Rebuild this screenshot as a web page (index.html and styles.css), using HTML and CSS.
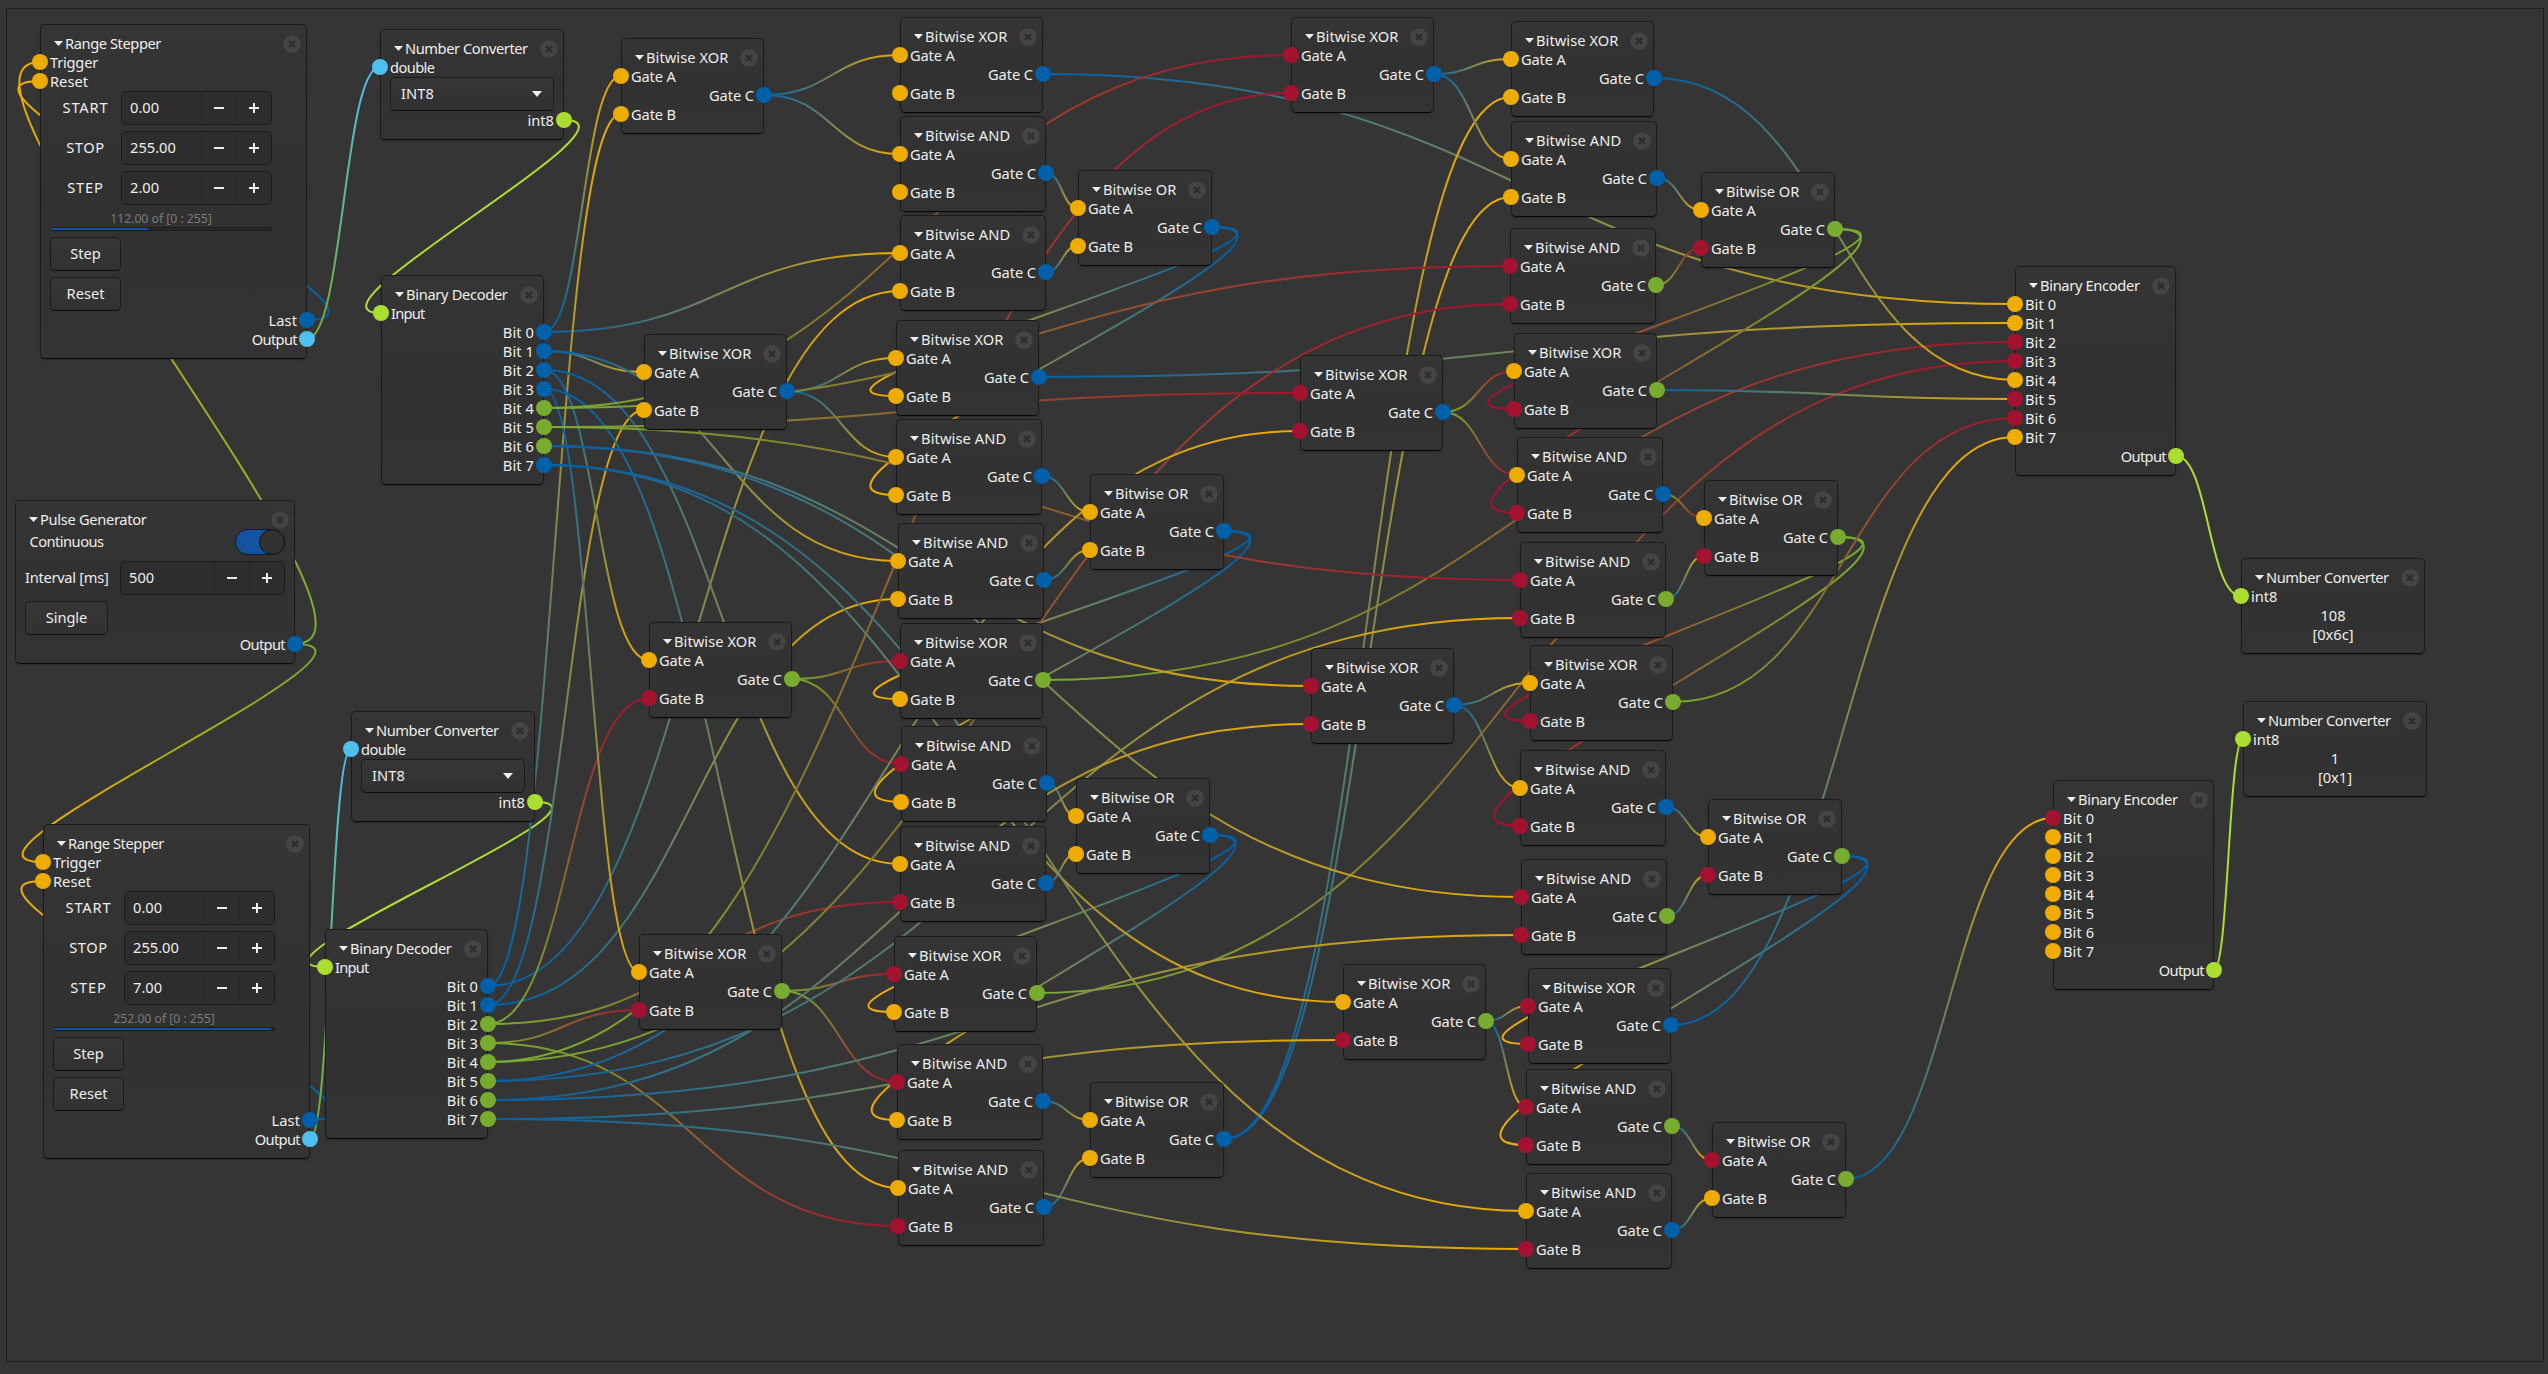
FILE: index.html
```html
<!DOCTYPE html>
<html lang="en">
<head>
<meta charset="utf-8">
<title>Node graph – 8-bit adder</title>
<link rel="stylesheet" href="styles.css">
</head>
<body>
<main class="viewport">
  <svg class="wires" id="wires" width="2548" height="1374" viewBox="0 0 2548 1374"></svg>
  <div class="nodes" id="nodes"></div>
</main>
<script src="graph.js"></script>
</body>
</html>
```
FILE: styles.css
```css
* {
  box-sizing: border-box;
}

body {
  margin: 0;
  width: 2548px;
  height: 1374px;
  overflow: hidden;
  background: #353535;
  color: #eeeeec;
  font: 14.67px/19px "Noto Sans", "Open Sans", sans-serif;
}

.viewport {
  position: relative;
  width: 2548px;
  height: 1374px;
}

.viewport::before {
  content: "";
  position: absolute;
  inset: 8px 4px 12px 6px;
  border: 1px solid #1d1d1d;
}

.wires {
  position: absolute;
  inset: 0;
}

.wire {
  fill: none;
  stroke-width: 2;
}

.node {
  position: absolute;
  display: flex;
  flex-direction: column;
  padding: 9px;
  border: 1px solid #1b1b1b;
  border-bottom-color: #070707;
  border-radius: 5px;
  background: linear-gradient(#353535, #313131 50%, #333333);
  box-shadow: 0 1px 2px rgba(0, 0, 0, 0.25);
  white-space: nowrap;
}

.title {
  display: flex;
  align-items: center;
  height: 19px;
  padding-left: 4px;
}

.caret {
  flex: none;
  width: 9px;
  height: 5px;
  margin-right: 2px;
  background: #eeeeec;
  clip-path: polygon(0 0, 100% 0, 50% 100%);
}

.title .name {
  flex: 1;
}

.close {
  flex: none;
  width: 18px;
  height: 18px;
  margin: 1px -4px 0 0;
}

.port {
  position: relative;
  height: 19px;
}

.port.out {
  text-align: right;
}

.port::before {
  content: "";
  position: absolute;
  top: 1px;
  left: -18px;
  width: 16px;
  height: 16px;
  border-radius: 50%;
  background: var(--port);
}

.port.out::before {
  left: auto;
  right: -18px;
}

.orange { --port: #eeab00; }
.red { --port: #a3132f; }
.blue { --port: #0060a9; }
.green { --port: #78ac2f; }
.sky { --port: #4fbfef; }
.lime { --port: #aade31; }

.form {
  display: grid;
  row-gap: 6px;
  justify-items: stretch;
  align-items: center;
}

.stepper-form {
  grid-template-columns: 71px 151px;
}

.pulse-form {
  grid-template-columns: 83px 165px;
  column-gap: 12px;
}

.label {
  padding-bottom: 2px;
  text-align: center;
}

.spin,
.button,
.combo {
  height: 34px;
  border: 1px solid #1b1b1b;
  border-radius: 5px;
}

.spin {
  display: flex;
  align-items: stretch;
  line-height: 30px;
  background: #2d2d2d;
}

.spin .value {
  flex: 1;
  padding-left: 8px;
}

.spin .sign {
  display: flex;
  align-items: center;
  justify-content: center;
  width: 35px;
  border-left: 1px solid #262626;
}

.button {
  line-height: 31px;
  text-align: center;
  background: linear-gradient(#363636, #323232);
  border-bottom-color: #0c0c0c;
}

.combo {
  display: flex;
  align-items: center;
  justify-content: space-between;
  padding: 0 11px 2px 10px;
  background: linear-gradient(#363636, #313131);
  border-bottom-color: #0c0c0c;
}

.combo .caret {
  width: 10px;
  height: 6px;
  margin: 2px 0 0;
}

.progress {
  width: 222px;
  margin: 6px 0;
}

.progress .text {
  height: 16px;
  font-size: 12.2px;
  line-height: 16px;
  text-align: center;
  color: #7b7b79;
}

.track {
  height: 4px;
  border: 1px solid #1b1b1b;
  border-radius: 2px;
  background: #282828;
}

.fill {
  height: 2px;
  background: #1553a0;
}

.actions {
  display: flex;
  flex-direction: column;
  gap: 6px;
  width: 71px;
}

.switch {
  justify-self: end;
  width: 50px;
  height: 26px;
  border: 1px solid #0b1c33;
  border-radius: 13px;
  background: #1553a0;
}

.switch .knob {
  width: 26px;
  height: 26px;
  margin: -1px -1px 0 auto;
  border: 1px solid #0a121e;
  border-radius: 50%;
  background: #323232;
}

.pulse-action {
  width: 83px;
  margin-top: 6px;
}

.readout {
  text-align: center;
}
```
FILE: graph.js
```js
const CLOSE = '<svg class="close" viewBox="0 0 18 18"><circle cx="9" cy="9" r="8.8" fill="#454545"/>' +
  '<path d="M6 6l6 6M12 6l-6 6" stroke="#2c2c2c" stroke-width="2.4"/></svg>';
const MINUS = '<svg width="12" height="12"><path d="M1 6h10" stroke="#eeeeec" stroke-width="2"/></svg>';
const PLUS = '<svg width="12" height="12"><path d="M1 6h10M6 1v10" stroke="#eeeeec" stroke-width="2"/></svg>';

const COLORS = { orange: '#eeab00', red: '#a3132f', blue: '#0060a9', green: '#78ac2f', sky: '#4fbfef', lime: '#aade31' };
const CODE = { o: 'orange', r: 'red', b: 'blue', g: 'green', s: 'sky', l: 'lime' };
const ports = {};

const input = (key, text, color) => ({ key, text, color: CODE[color], side: 'in' });
const output = (key, text, color) => ({ key, text, color: CODE[color], side: 'out' });
const bits = (make, colors) => [...colors].map((c, i) => make('bit' + i, 'Bit ' + i, c));

const nodesEl = document.getElementById('nodes');

function node(id, title, x, y, w, h, rows) {
  let html = `<div class="title"><i class="caret"></i><span class="name">${title}</span>${CLOSE}</div>`;
  for (const row of rows) {
    html += typeof row === 'string' ? row : `<div class="port ${row.side} ${row.color}"><span>${row.text}</span></div>`;
  }
  const el = document.createElement('section');
  el.className = 'node';
  el.style.cssText = `left:${x}px;top:${y}px;width:${w}px;height:${h}px`;
  el.innerHTML = html;
  nodesEl.append(el);
  const shown = rows.filter(r => typeof r !== 'string');
  el.querySelectorAll('.port').forEach((p, i) => {
    const r = shown[i];
    ports[id + '.' + r.key] = [r.side === 'in' ? x : x + w, y + 1 + p.offsetTop + 9];
  });
}

const spin = v => `<div class="spin"><span class="value">${v}</span><span class="sign">${MINUS}</span><span class="sign">${PLUS}</span></div>`;

function stepper(id, x, y, step, value, percent) {
  node(id, 'Range Stepper', x, y, 267, 335, [
    input('trigger', 'Trigger', 'o'), input('reset', 'Reset', 'o'),
    `<div class="form stepper-form"><span class="label">START</span>${spin('0.00')}` +
    `<span class="label">STOP</span>${spin('255.00')}<span class="label">STEP</span>${spin(step)}</div>` +
    `<div class="progress"><div class="text">${value} of [0 : 255]</div>` +
    `<div class="track"><div class="fill" style="width:${percent}%"></div></div></div>` +
    '<div class="actions"><div class="button">Step</div><div class="button">Reset</div></div>',
    output('last', 'Last', 'b'), output('out', 'Output', 's')
  ]);
}

function converter(id, x, y) {
  node(id, 'Number Converter', x, y, 184, 111, [
    input('in', 'double', 's'),
    '<div class="combo"><span>INT8</span><i class="caret"></i></div>',
    output('out', 'int8', 'l')
  ]);
}

function display(id, x, y, dec, hex) {
  node(id, 'Number Converter', x, y, 184, 96, [
    input('in', 'int8', 'l'), `<div class="readout">${dec}<br>${hex}</div>`
  ]);
}

const GATE_WIDTH = { XOR: 143, AND: 146, OR: 134 };

function gate(id, kind, x, y, colors) {
  node(id, 'Bitwise ' + kind, x, y, GATE_WIDTH[kind], 96, [
    input('a', 'Gate A', colors[0]), output('c', 'Gate C', colors[1]), input('b', 'Gate B', colors[2])
  ]);
}

stepper('range1', 40, 24, '2.00', '112.00', 43.9);
stepper('range2', 43, 824, '7.00', '252.00', 98.8);
node('pulse', 'Pulse Generator', 15, 500, 280, 164, [
  '<div class="form pulse-form"><span class="label">Continuous</span><div class="switch"><div class="knob"></div></div>' +
  `<span class="label">Interval [ms]</span>${spin('500')}</div><div class="button pulse-action">Single</div>`,
  output('out', 'Output', 'b')
]);
converter('conv1', 380, 29);
converter('conv2', 351, 711);
node('dec1', 'Binary Decoder', 381, 275, 163, 210, [input('in', 'Input', 'l'), ...bits(output, 'bbbbgggb')]);
node('dec2', 'Binary Decoder', 325, 929, 163, 210, [input('in', 'Input', 'l'), ...bits(output, 'bbgggggg')]);
node('enc1', 'Binary Encoder', 2015, 266, 161, 210, [...bits(input, 'oorrorro'), output('out', 'Output', 'l')]);
node('enc2', 'Binary Encoder', 2053, 780, 161, 210, [...bits(input, 'rooooooo'), output('out', 'Output', 'l')]);
display('show1', 2241, 558, '108', '[0x6c]');
display('show2', 2243, 701, '1', '[0x1]');

// One row per adder stage: half sum, sum, propagate, generate, carry.
const STAGES = [
  [[621, 38, 'obo'], [900, 17, 'obo'], [900, 116, 'obo'], [900, 215, 'obo'], [1078, 170, 'obo']],
  [[644, 334, 'obo'], [896, 320, 'obo'], [896, 419, 'obo'], [898, 523, 'obo'], [1090, 474, 'obo']],
  [[649, 622, 'ogr'], [900, 623, 'rgo'], [901, 726, 'rbo'], [900, 826, 'obr'], [1076, 778, 'obo']],
  [[639, 934, 'ogr'], [894, 936, 'rgo'], [897, 1044, 'rbo'], [898, 1150, 'obr'], [1090, 1082, 'obo']],
  [[1291, 17, 'rbr'], [1511, 21, 'obo'], [1511, 121, 'obo'], [1510, 228, 'rgr'], [1701, 172, 'ogr']],
  [[1300, 355, 'rbr'], [1514, 333, 'ogr'], [1517, 437, 'obr'], [1520, 542, 'rgr'], [1704, 480, 'ogr']],
  [[1311, 648, 'rbr'], [1530, 645, 'ogr'], [1520, 750, 'obr'], [1521, 859, 'rgr'], [1708, 799, 'ogr']],
  [[1343, 964, 'ogr'], [1528, 968, 'rbr'], [1526, 1069, 'rgr'], [1526, 1173, 'obr'], [1712, 1122, 'rgo']]
];
const KINDS = [['half', 'XOR'], ['sum', 'XOR'], ['prop', 'AND'], ['gen', 'AND'], ['carry', 'OR']];
STAGES.forEach((stage, i) => stage.forEach(([x, y, colors], k) => gate(KINDS[k][0] + i, KINDS[k][1], x, y, colors)));

// Set widths of the interface labels, in pixels; letter spacing absorbs the difference.
const WIDTHS = {
  'Bitwise XOR': 82.5, 'Bitwise AND': 85.3, 'Bitwise OR': 73.4, 'Pulse Generator': 106.5, 'Number Converter': 122.7,
  'Binary Decoder': 101.6, 'Binary Encoder': 99.6, 'Range Stepper': 96, 'Interval [ms]': 83.5, 'Continuous': 74,
  'Gate A': 44.8, 'Gate B': 45, 'Gate C': 45, 'START': 46, 'STOP': 38.5, 'STEP': 36.5, 'Output': 45.2, 'Last': 28.5,
  'Trigger': 48, 'double': 44.5, 'int8': 26.5, 'Input': 33.5, 'Single': 41.5, 'Step': 30.5, 'INT8': 33
};
nodesEl.querySelectorAll('.name, .port span, .label, .button, .combo span').forEach(el => {
  const text = el.textContent;
  const target = text.startsWith('Bit ') ? 31.2 : WIDTHS[text];
  if (!target) return;
  const range = document.createRange();
  range.selectNodeContents(el);
  el.style.letterSpacing = ((target - range.getBoundingClientRect().width) / text.length).toFixed(3) + 'px';
});

let defs = '';
let paths = '';
let count = 0;

function wire(from, to, colors) {
  const [x1, y1] = ports[from];
  const [x2, y2] = ports[to];
  const bend = Math.abs(x2 - x1) / 2;
  const id = 'w' + count++;
  defs += `<linearGradient id="${id}" gradientUnits="userSpaceOnUse" x1="${x1}" y1="${y1}" x2="${x2}" y2="${y2}">` +
    `<stop offset="0" stop-color="${COLORS[CODE[colors[0]]]}"/><stop offset="1" stop-color="${COLORS[CODE[colors[1]]]}"/></linearGradient>`;
  paths += `<path class="wire" stroke="url(#${id})" d="M${x1} ${y1}C${x1 + bend} ${y1} ${x2 - bend} ${y2} ${x2} ${y2 + 0.01}"/>`;
}

wire('pulse.out', 'range1.trigger', 'go');
wire('pulse.out', 'range2.trigger', 'go');
for (const n of [1, 2]) {
  wire(`range${n}.last`, `range${n}.reset`, 'bo');
  wire(`range${n}.out`, `conv${n}.in`, 'gs');
  wire(`conv${n}.out`, `dec${n}.in`, 'll');
  wire(`enc${n}.out`, `show${n}.in`, 'll');
}

const A = ['bo', 'bo', 'bo', 'bo', 'gr', 'gr', 'bo', 'bo'];
const B = ['bo', 'bo', 'gr', 'gr', 'gr', 'bo', 'bo', 'bo'];
const HALF = ['bo', 'bo', 'gr', 'gr', 'bo', 'gr', 'bo', 'bo'];
const SUM = ['bo', 'bo', 'gr', 'gr', 'bo', 'bo', 'gr', 'bo'];
const PROP = ['bo', 'bo', 'bo', 'bo', 'bo', 'gr', 'bo', 'bo'];
const GEN = ['bo', 'bo', 'bo', 'bo', 'gr', 'bo', 'bo', 'bo'];
const CARRY = ['bo', 'bo', 'bo', 'bo', 'gr', 'gr', 'bo'];
for (let i = 0; i < 8; i++) {
  wire(`dec1.bit${i}`, `half${i}.a`, A[i]);
  wire(`dec1.bit${i}`, `gen${i}.a`, A[i]);
  wire(`dec2.bit${i}`, `half${i}.b`, B[i]);
  wire(`dec2.bit${i}`, `gen${i}.b`, B[i]);
  wire(`half${i}.c`, `sum${i}.a`, HALF[i]);
  wire(`half${i}.c`, `prop${i}.a`, HALF[i]);
  wire(`prop${i}.c`, `carry${i}.a`, PROP[i]);
  wire(`gen${i}.c`, `carry${i}.b`, GEN[i]);
  wire(`sum${i}.c`, `enc1.bit${i}`, SUM[i]);
  if (i < 7) {
    wire(`carry${i}.c`, `sum${i + 1}.b`, CARRY[i]);
    wire(`carry${i}.c`, `prop${i + 1}.b`, CARRY[i]);
  }
}
wire('carry7.c', 'enc2.bit0', 'bo');

document.getElementById('wires').innerHTML = `<defs>${defs}</defs>${paths}`;
```
